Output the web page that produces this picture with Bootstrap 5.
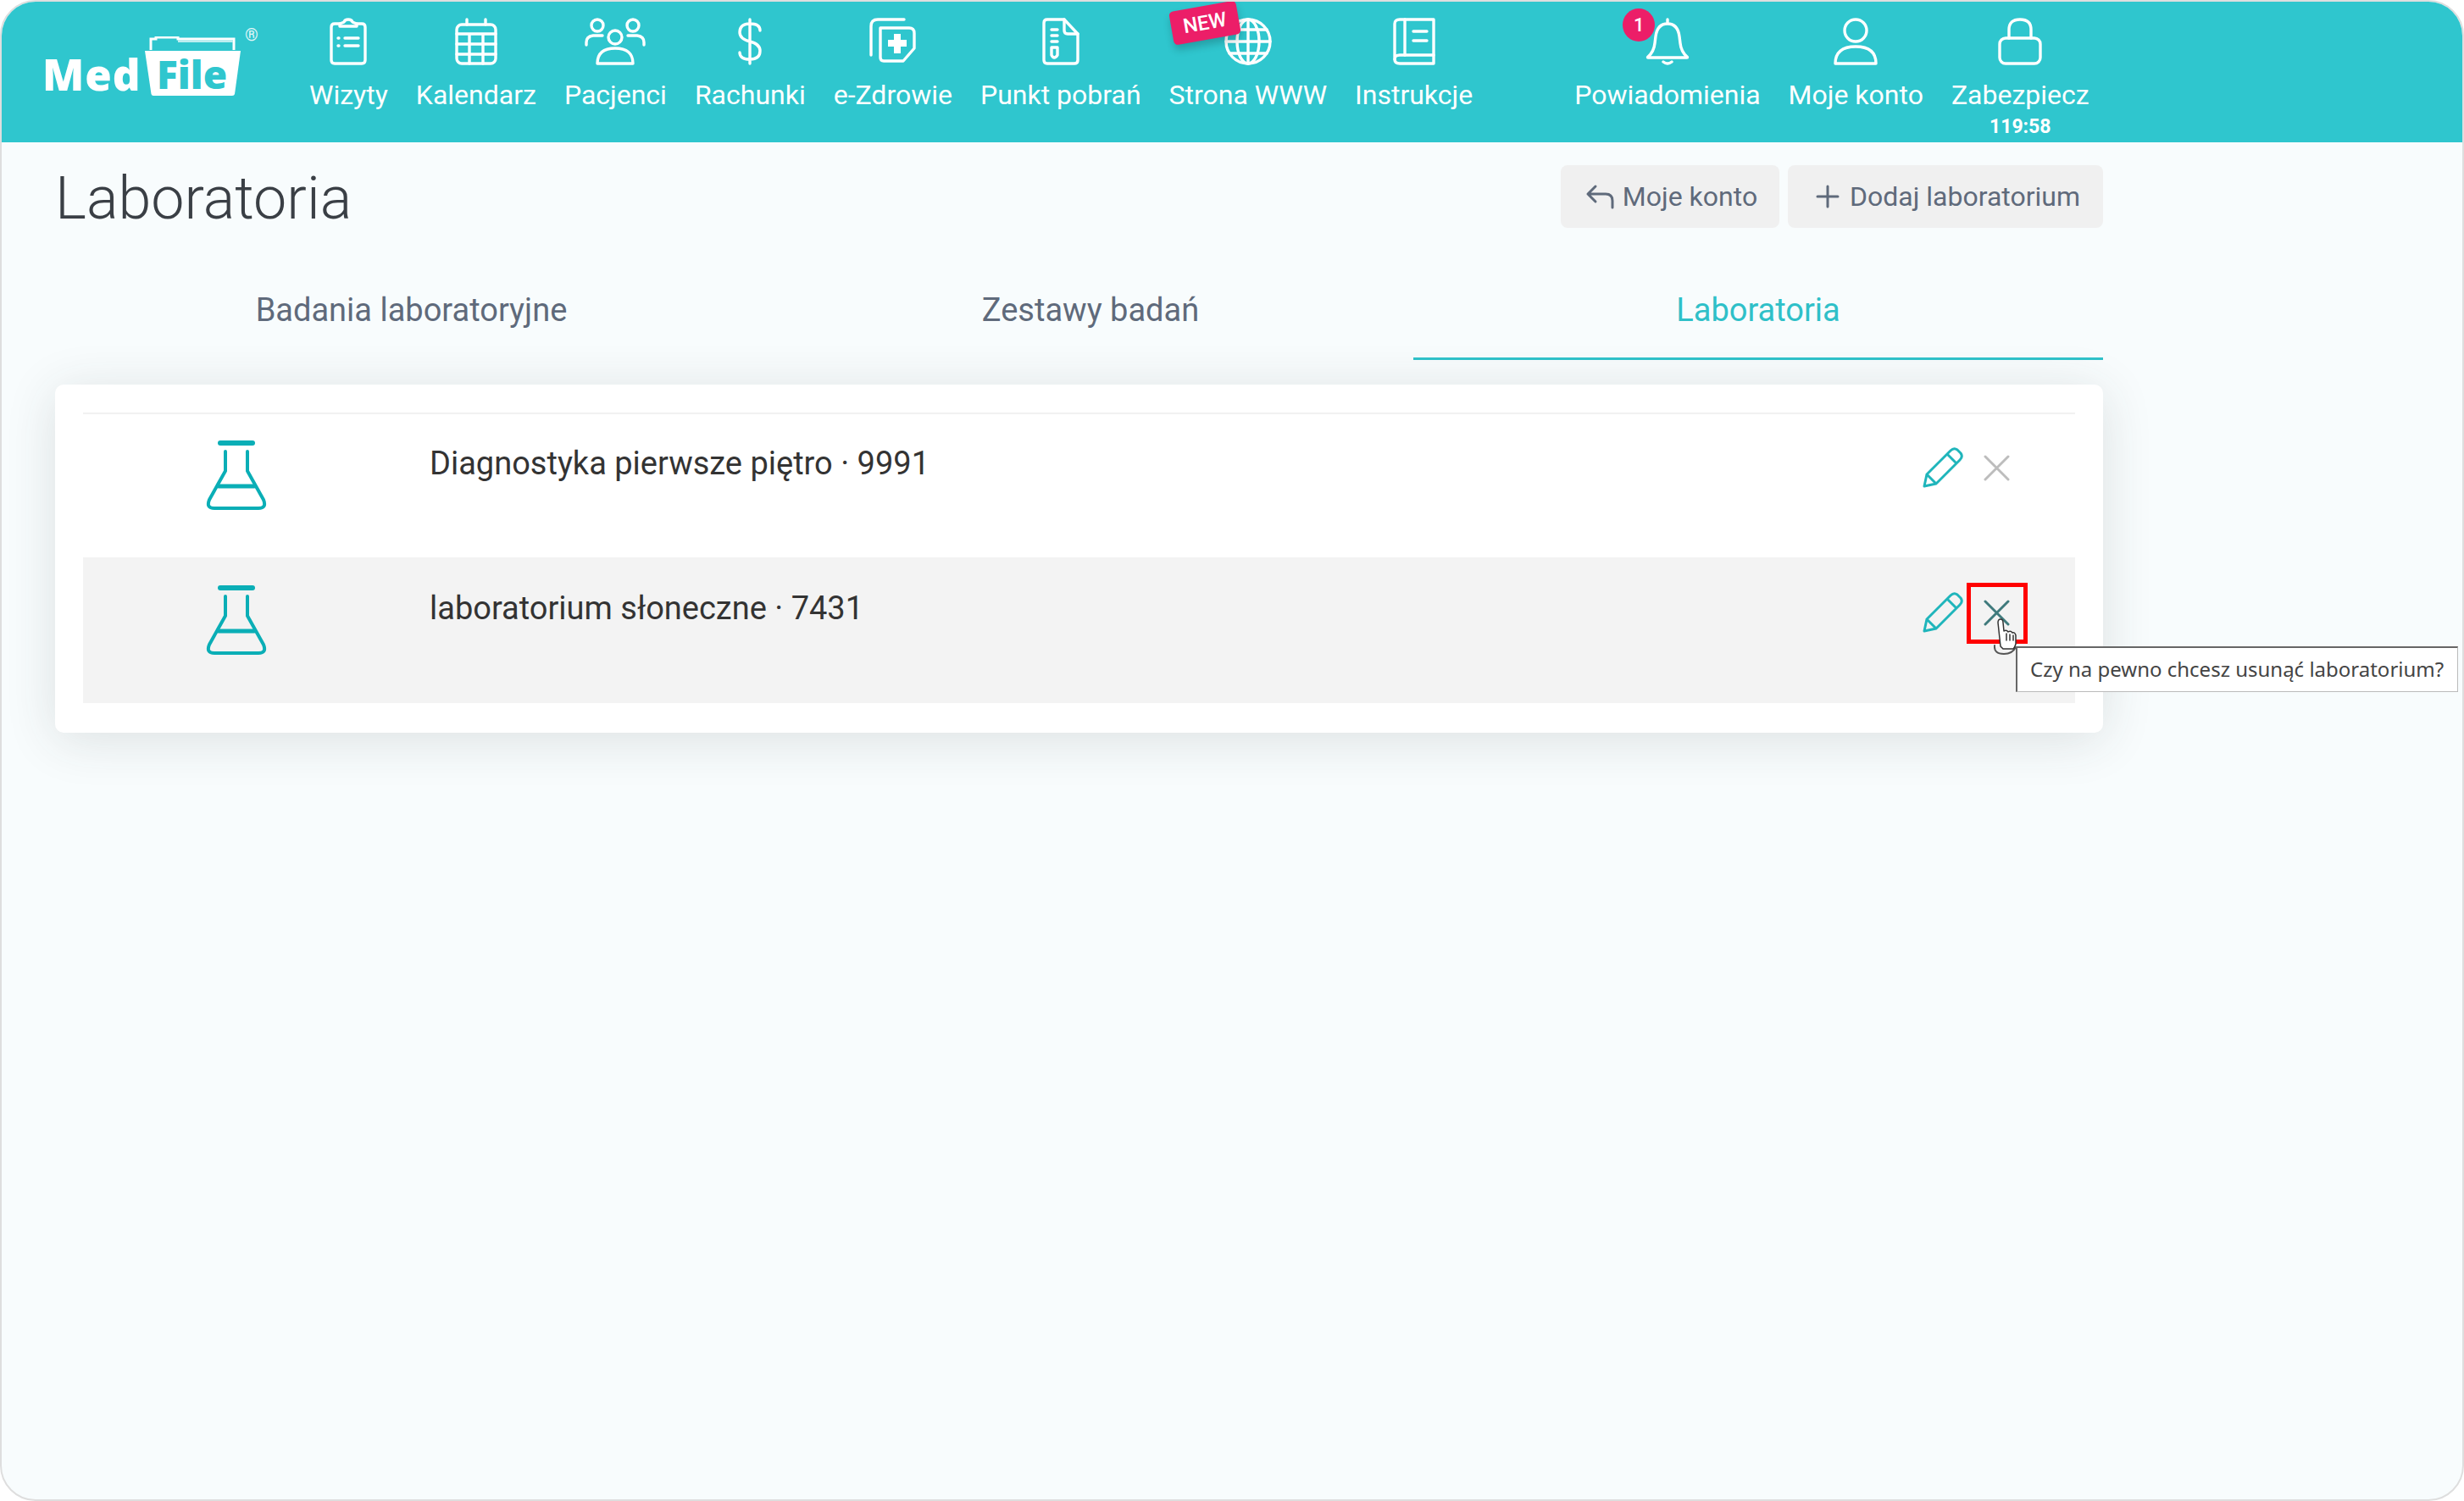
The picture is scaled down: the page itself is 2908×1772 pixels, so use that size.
<!DOCTYPE html>
<html lang="pl">
<head>
  <meta charset="UTF-8" />
  <meta name="viewport" content="width=device-width, initial-scale=1.0"/>
  <title>MedFile | Laboratoria</title>
  <link href="https://cdn.jsdelivr.net/npm/bootstrap@5.3.0/dist/css/bootstrap.min.css" rel="stylesheet"/>
  <style>
    html, body { margin: 0; background: #fff; overflow: hidden; }
    body { font-family: Roboto, "Liberation Sans", sans-serif; }
    .app-frame {
      position: relative; width: 2908px; height: 1772px; overflow: hidden;
      border: 2px solid #dedede; border-radius: 42px; background: #f8fcfd;
    }
    .top-bar { height: 166px; background: #2fc6ce; color: #fff; padding-left: 48px; }
    .brand { width: 315px; height: 112px; position: relative; flex: none; margin-top: 19px; }
    .brand-med { position: absolute; left: 0; top: 35px; font-family: "Open Sans", sans-serif; font-size: 51px; line-height: 62px; font-weight: 800; letter-spacing: 1px; }
    .brand-folder { position: absolute; left: 121px; top: 22px; }
    .brand-reg { position: absolute; left: 239px; top: 10px; font-size: 20px; line-height: 20px; opacity: .85; }
    .top-item { position: relative; padding-top: 19px; margin-right: 33px; text-align: center; }
    .top-item.spacer { margin-left: 87px; }
    .top-icon { height: 56px; display: flex; justify-content: center; align-items: flex-start; }
    .top-icon svg { fill: none; stroke: #fff; stroke-width: 3.4; stroke-linecap: round; stroke-linejoin: round; }
    .top-label { margin-top: 16px; font-size: 32px; line-height: 38px; white-space: nowrap; }
    .top-time { font-size: 23px; line-height: 24px; font-weight: 700; margin-top: 7px; }
    .new-tag {
      position: absolute; left: 2px; top: 5px; width: 80px; height: 40px; background: #ec1e68; color: #fff; z-index: 2;
      border-radius: 5px; transform: rotate(-10deg); font-size: 24px; line-height: 40px; font-weight: 500;
      box-shadow: 0 6px 10px rgba(0,0,0,.2);
    }
    .bell-count {
      position: absolute; left: 57px; top: 8px; width: 38px; height: 39px; border-radius: 50%; z-index: 2;
      background: #ec1e68; font-size: 22px; line-height: 39px; font-weight: 500;
    }
    .page-body { margin: 0 424px 0 63px; }
    .page-title { font-size: 70px; line-height: 80px; font-weight: 300; color: #3a3f45; margin: 0; padding-top: 26px; }
    .heading-actions { padding-top: 27px; gap: 10px; }
    .soft-btn {
      height: 74px; background: #f0f0f0; color: #5f6a7b; border: 0; border-radius: 8px;
      font-size: 32px; line-height: 74px; padding: 0; display: flex; align-items: center; justify-content: center; gap: 10px;
    }
    .soft-btn:hover { background: #f0f0f0; color: #5f6a7b; }
    .btn-back { width: 258px; padding-left: 3px; }
    .btn-add { width: 372px; gap: 12px; padding-left: 6px; }
    .soft-btn svg { fill: none; stroke: #5f6a7b; stroke-width: 3; stroke-linecap: round; stroke-linejoin: round; }
    .tab-row { margin-top: 35px; }
    .tab-row .nav-link {
      font-size: 38px; line-height: 44px; padding: 35px 0 34px; color: #5f6a7b;
      border-bottom: 3px solid transparent;
    }
    .tab-row .nav-link.active { color: #2fc0c8; border-bottom-color: #2fc0c8; }
    .tab-a { width: 841px; flex: none !important; }
    .tab-b { width: 762px; flex: none !important; }
    .tab-c { width: 814px; flex: none !important; }
    .lab-card {
      margin-top: 29px; height: 411px; padding: 33px 33px 0; background: #fff; border-radius: 10px;
      box-shadow: 0 8px 60px rgba(50,60,60,.14);
    }
    .lab-row { height: 171px; position: relative; }
    .lab-row.first { border-top: 2px solid #f1f1f1; }
    .lab-row.hovered { background: #f3f3f3; padding-top: 2px; height: 172px; }
    .lab-flask { width: 409px; flex: none; padding: 31px 48px 0 0; text-align: center; }
    .lab-flask svg { fill: none; stroke: #0aaeb6; stroke-width: 4; stroke-linecap: round; stroke-linejoin: round; }
    .lab-name { font-size: 38px; line-height: 44px; color: #333; padding-top: 36px; }
    .lab-actions { margin-left: auto; padding: 39px 77px 0 0; gap: 24px; }
    .lab-actions svg { fill: none; stroke-linecap: round; stroke-linejoin: round; }
    .red-box { position: absolute; left: -20px; top: -20px; width: 72px; height: 72px; border: 5px solid #f00; }
    .x-wrap { position: relative; width: 31px; height: 46px; margin-top: 9px; }
    .hand { position: absolute; left: 12px; top: 22px; z-index: 3; }
    .confirm-tip {
      position: absolute; left: 2377px; top: 761px; width: 522px; height: 54px; z-index: 4;
      background: #fff; color: #444; border: 1px solid #bbb; border-top: 2px solid #666; border-left: 2px solid #666;
      font-family: "Noto Sans", sans-serif; font-size: 24px; line-height: 50px; padding-left: 15px; white-space: nowrap;
    }
  </style>
</head>
<body>
  <div class="app-frame">
    <div class="top-bar d-flex">
      <div class="brand">
        <span class="brand-med">Med</span>
        <svg class="brand-folder" width="113" height="82" viewBox="0 0 113 82">
          <path d="M7 16 V3 H13 V1 H39 V3 H105 V16" fill="none" stroke="#fff" stroke-width="3"/>
          <path d="M39 4 H104 V7 H39 Z" fill="#bdeef0"/>
          <path d="M0 17 H113 L106 68 Q105.500 70 103 70 H10 Q8 70 7.500 68 Z" fill="#fff"/>
          <text x="14" y="62" font-family="'Open Sans', sans-serif" font-size="46" font-weight="800" fill="#2fc6ce">File</text>
        </svg>
        <span class="brand-reg">&reg;</span>
      </div>

      <div class="top-item">
        <div class="top-icon"><svg width="44" height="56" viewBox="0 0 44 56"><path d="M12 7 H6 Q2 7 2 11 V50 Q2 54 6 54 H38 Q42 54 42 50 V11 Q42 7 38 7 H32"/><path d="M12 10 H32 V7 Q29 6 27 5 Q26 2 22 2 Q18 2 17 5 Q15 6 12 7 Z"/><path d="M10 24 H11 M10 33 H11 M18 24 H34 M18 33 H34"/></svg></div>
        <div class="top-label">Wizyty</div>
      </div>
      <div class="top-item">
        <div class="top-icon"><svg width="50" height="56" viewBox="0 0 50 56"><rect x="2" y="8" width="46" height="46" rx="6"/><path d="M14 2 V8 M36 2 V8 M2 19 H48 M2 31 H48 M2 43 H48 M17 19 V54 M33 19 V54"/></svg></div>
        <div class="top-label">Kalendarz</div>
      </div>
      <div class="top-item">
        <div class="top-icon"><svg width="72" height="56" viewBox="0 0 72 56"><circle cx="15" cy="9" r="7"/><circle cx="57" cy="9" r="7"/><circle cx="36" cy="23" r="8"/><path d="M2 32 V29 Q2 22 10 21 H21 M51 21 H62 Q70 22 70 29 V32"/><path d="M15 54 Q15 36 36 36 Q57 36 57 54 Z"/></svg></div>
        <div class="top-label">Pacjenci</div>
      </div>
      <div class="top-item">
        <div class="top-icon"><svg width="30" height="56" viewBox="0 0 30 56"><path d="M15 2 V54 M27 15 Q27 7 15 7 Q3 7 3 17 Q3 25 15 28 Q27 31 27 39 Q27 49 15 49 Q3 49 3 41"/></svg></div>
        <div class="top-label">Rachunki</div>
      </div>
      <div class="top-item">
        <div class="top-icon"><svg width="56" height="56" viewBox="0 0 56 56"><path d="M2 44 V10 Q2 2 10 2 H41"/><path d="M13 12 Q13 14 13 18 V47 Q13 51 17 51 H40 L53 36 V18 Q53 12 47 12 Z"/><path d="M33 19 V42 M22 30 H44" stroke-width="8" stroke-linecap="butt"/></svg></div>
        <div class="top-label">e-Zdrowie</div>
      </div>
      <div class="top-item">
        <div class="top-icon"><svg width="44" height="56" viewBox="0 0 44 56"><path d="M26 2 H6 Q2 2 2 6 V50 Q2 54 6 54 H38 Q42 54 42 50 V19 L26 2 Z"/><path d="M26 2 V15 Q26 19 30 19 H42"/><path d="M11 14 H18 M11 21 H18 M11 28 H18"/><path d="M11 35 H18 V44 Q14 50 11 44 Z"/></svg></div>
        <div class="top-label">Punkt pobra&#324;</div>
      </div>
      <div class="top-item">
        <div class="new-tag">NEW</div>
        <div class="top-icon"><svg width="58" height="56" viewBox="0 0 58 56"><circle cx="29" cy="28" r="26"/><ellipse cx="29" cy="28" rx="13" ry="26"/><path d="M29 2 V54 M3 28 H55 M7 14 H51 M7 42 H51"/></svg></div>
        <div class="top-label">Strona WWW</div>
      </div>
      <div class="top-item">
        <div class="top-icon"><svg width="50" height="56" viewBox="0 0 50 56"><path d="M8 2 H48 V44 H8 Q2 44 2 49 V7 Q2 2 8 2 Z"/><path d="M2 49 Q2 54 8 54 H48 V44"/><path d="M14 2 V44 M24 16 H40 M24 27 H40"/></svg></div>
        <div class="top-label">Instrukcje</div>
      </div>

      <div class="top-item spacer">
        <div class="bell-count">1</div>
        <div class="top-icon"><svg width="52" height="56" viewBox="0 0 52 56"><path d="M26 2 V7 M3 46 Q10 40 11 30 L12 22 Q14 7 26 7 Q38 7 40 22 L41 30 Q42 40 49 46 Q50 47 49 47 H3 Q2 47 3 46 Z"/><path d="M21 52 Q26 56 31 52"/></svg></div>
        <div class="top-label">Powiadomienia</div>
      </div>
      <div class="top-item">
        <div class="top-icon"><svg width="52" height="56" viewBox="0 0 52 56"><ellipse cx="26" cy="15" rx="13" ry="13"/><path d="M2 54 Q2 34 26 34 Q50 34 50 54 Z"/></svg></div>
        <div class="top-label">Moje konto</div>
      </div>
      <div class="top-item">
        <div class="top-icon"><svg width="52" height="56" viewBox="0 0 52 56"><rect x="2" y="24" width="48" height="30" rx="7"/><path d="M13 24 V14 Q13 2 26 2 Q39 2 39 14 V24"/></svg></div>
        <div class="top-label">Zabezpiecz</div>
        <div class="top-time">119:58</div>
      </div>
    </div>

    <div class="page-body">
      <div class="d-flex justify-content-between align-items-start">
        <h1 class="page-title">Laboratoria</h1>
        <div class="d-flex heading-actions">
          <button class="btn soft-btn btn-back"><svg width="34" height="30" viewBox="0 0 34 30"><path d="M12 3 L3 12 L12 21 M3 12 H24 Q32 12 32 20 V28"/></svg>Moje konto</button>
          <button class="btn soft-btn btn-add"><svg width="28" height="28" viewBox="0 0 28 28"><path d="M14 2 V26 M2 14 H26"/></svg>Dodaj laboratorium</button>
        </div>
      </div>

      <ul class="nav nav-fill tab-row">
        <li class="nav-item tab-a"><a class="nav-link" href="#">Badania laboratoryjne</a></li>
        <li class="nav-item tab-b"><a class="nav-link" href="#">Zestawy bada&#324;</a></li>
        <li class="nav-item tab-c"><a class="nav-link active" href="#">Laboratoria</a></li>
      </ul>

      <div class="lab-card">
        <div class="lab-row first d-flex">
          <div class="lab-flask"><svg width="72" height="82" viewBox="0 0 72 82"><path d="M17 3 H55" stroke-width="6"/><path d="M23 13 V36 L4 70 Q0 80 10 80 H62 Q72 80 68 70 L49 36 V13"/><path d="M15 54 H57" stroke-width="5"/></svg></div>
          <div class="lab-name">Diagnostyka pierwsze pi&#281;tro &middot; 9991</div>
          <div class="lab-actions d-flex">
            <svg width="48" height="48" viewBox="0 0 48 48" stroke="#1fb5bb" stroke-width="3"><path d="M2 46 L5 32 L33 4 Q37 0 41 3 L45 7 Q48 11 44 15 L16 43 Z M5 32 L16 43 M29 8 L40 19"/></svg>
            <div class="x-wrap"><svg width="31" height="31" viewBox="0 0 31 31" stroke="#bdbdbd" stroke-width="3"><path d="M2 2 L29 29 M29 2 L2 29"/></svg></div>
          </div>
        </div>
        <div class="lab-row hovered d-flex">
          <div class="lab-flask"><svg width="72" height="82" viewBox="0 0 72 82"><path d="M17 3 H55" stroke-width="6"/><path d="M23 13 V36 L4 70 Q0 80 10 80 H62 Q72 80 68 70 L49 36 V13"/><path d="M15 54 H57" stroke-width="5"/></svg></div>
          <div class="lab-name">laboratorium s&#322;oneczne &middot; 7431</div>
          <div class="lab-actions d-flex">
            <svg width="48" height="48" viewBox="0 0 48 48" stroke="#1fb5bb" stroke-width="3"><path d="M2 46 L5 32 L33 4 Q37 0 41 3 L45 7 Q48 11 44 15 L16 43 Z M5 32 L16 43 M29 8 L40 19"/></svg>
            <div class="x-wrap">
              <svg width="31" height="31" viewBox="0 0 31 31" stroke="#3f7a7c" stroke-width="3"><path d="M2 2 L29 29 M29 2 L2 29"/></svg>
              <div class="red-box"></div>
              <svg class="hand" width="28" height="44" viewBox="0 0 28 44"><path d="M1 32 Q0 42 12 42 Q22 42 26 34" stroke="#555" stroke-width="2"/><path d="M8 33 L5 5 Q5 1 8 1 Q11 1 11 5 L12 15 Q15 13 17 16 Q20 14 22 17 Q25 16 26 20 L26 30 Q25 34 23 36 H11 Z M15 18 V26 M19 19 V26 M23 20 V26" fill="#fff" stroke="#333" stroke-width="1.500"/></svg>
            </div>
          </div>
        </div>
      </div>
    </div>

    <div class="confirm-tip">Czy na pewno chcesz usun&#261;&#263; laboratorium?</div>
  </div>

  <script src="https://cdn.jsdelivr.net/npm/bootstrap@5.3.0/dist/js/bootstrap.bundle.min.js"></script>
</body>
</html>
